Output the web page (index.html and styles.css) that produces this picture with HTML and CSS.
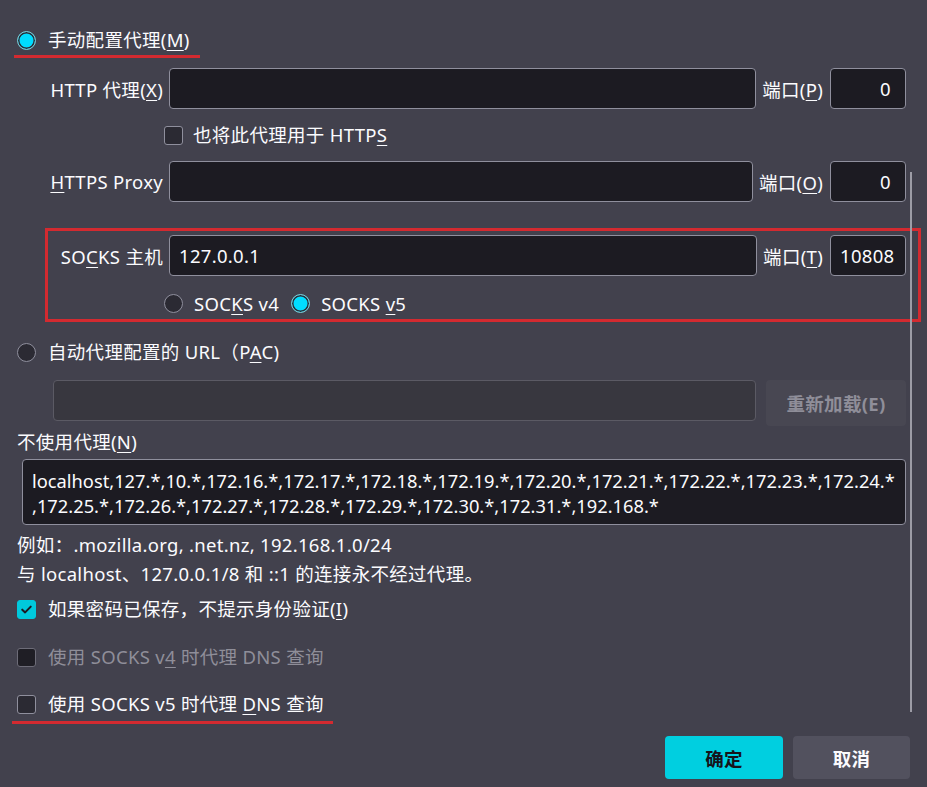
FILE: index.html
```html
<!DOCTYPE html>
<html lang="zh-CN">
<head>
<meta charset="utf-8">
<title>连接设置</title>
<link rel="stylesheet" href="styles.css">
</head>
<body>
<div class="dialog">
  <div class="radio-row top-radio annot-1">
    <span class="radio checked"></span>
    <span>手动配置代理(<u>M</u>)</span>
  </div>

  <div class="proxy-block">
    <div class="field-row row-http">
      <span class="field-label">HTTP 代理(<u>X</u>)</span>
      <div class="input grow"></div>
      <span class="port-label">端口(<u>P</u>)</span>
      <div class="input port">0</div>
    </div>

    <div class="check-row share-row">
      <span class="checkbox"></span>
      <span>也将此代理用于 HTTP<u>S</u></span>
    </div>

    <div class="field-row row-https">
      <span class="field-label"><u>H</u>TTPS Proxy</span>
      <div class="input grow"></div>
      <span class="port-label">端口(<u>O</u>)</span>
      <div class="input port">0</div>
    </div>

    <div class="socks-box">
      <div class="field-row">
        <span class="field-label">SO<u>C</u>KS 主机</span>
        <div class="input grow host">127.0.0.1</div>
        <span class="port-label">端口(<u>T</u>)</span>
        <div class="input port">10808</div>
      </div>
      <div class="socks-versions">
        <span class="radio"></span>
        <span class="ver-text">SOC<u>K</u>S v4</span>
        <span class="radio checked"></span>
        <span class="ver-text">SOCKS <u>v</u>5</span>
      </div>
    </div>
  </div>

  <div class="radio-row pac-radio">
    <span class="radio"></span>
    <span>自动代理配置的 URL（P<u>A</u>C)</span>
  </div>

  <div class="pac-row">
    <div class="input disabled grow"></div>
    <div class="reload-btn">重新加载(E)</div>
  </div>

  <div class="noproxy-label">不使用代理(<u>N</u>)</div>
  <div class="textarea">localhost,127.*,10.*,172.16.*,172.17.*,172.18.*,172.19.*,172.20.*,172.21.*,172.22.*,172.23.*,172.24.*<br>,172.25.*,172.26.*,172.27.*,172.28.*,172.29.*,172.30.*,172.31.*,192.168.*</div>

  <div class="hint first-hint">例如：.mozilla.org, .net.nz, 192.168.1.0/24</div>
  <div class="hint">与 localhost、127.0.0.1/8 和 ::1 的连接永不经过代理。</div>

  <div class="check-row main-check checked-row">
    <span class="checkbox checked"><svg viewBox="0 0 20 20" width="19" height="19"><path d="M5 10.2 L8.4 13.4 L15 6.6" fill="none" stroke="#1c1b22" stroke-width="2.4" stroke-linecap="round" stroke-linejoin="round"/></svg></span>
    <span>如果密码已保存，不提示身份验证(<u>I</u>)</span>
  </div>

  <div class="check-row main-check disabled-row">
    <span class="checkbox dim"></span>
    <span>使用 SOCKS v<u>4</u> 时代理 DNS 查询</span>
  </div>

  <div class="check-row main-check dns-row annot-2">
    <span class="checkbox"></span>
    <span>使用 SOCKS v5 时代理 <u>D</u>NS 查询</span>
  </div>

  <div class="button-row">
    <div class="btn primary">确定</div>
    <div class="btn secondary">取消</div>
  </div>

  <div class="scroll-line"></div>
</div>
</body>
</html>
```

FILE: styles.css
```css
html, body {
  margin: 0;
  padding: 0;
}
body {
  background: #42414d;
  color: #fbfbfe;
  font-family: "Noto Sans", "Noto Sans CJK SC", sans-serif;
  font-size: 18.5px;
  letter-spacing: 0.3px;
}
u {
  text-decoration: underline;
  text-decoration-thickness: 1px;
  text-underline-offset: 3px;
}
.dialog {
  position: relative;
  width: 927px;
  height: 787px;
  box-sizing: border-box;
  padding: 28px 17px 0 17px;
  display: flex;
  flex-direction: column;
  overflow: hidden;
}

/* radios & checkboxes */
.radio {
  width: 19px;
  height: 19px;
  box-sizing: border-box;
  border-radius: 50%;
  border: 1px solid #8f8f9d;
  background: #2b2a33;
  flex: none;
}
.radio.checked {
  background: #00ddff;
  border: 1px solid #7fc6d0;
  box-shadow: inset 0 0 0 1.5px #2b2a33;
}
.checkbox {
  width: 19px;
  height: 19px;
  box-sizing: border-box;
  border-radius: 3px;
  border: 1px solid #8f8f9d;
  background: #2b2a33;
  flex: none;
  display: flex;
  align-items: center;
  justify-content: center;
}
.checkbox.checked {
  background: #00c9dc;
  border-color: #00c9dc;
}
.checkbox.dim {
  background: #1f1e25;
  border-color: #6d6c78;
}

.radio-row, .check-row {
  display: flex;
  align-items: center;
  height: 24px;
  line-height: 24px;
  position: relative;
  white-space: nowrap;
}
.radio-row .radio, .check-row .checkbox {
  margin-right: 12px;
}

/* proxy fields */
.proxy-block {
  display: flex;
  flex-direction: column;
  margin-left: 31px;
  margin-right: 4px;
}
.field-row {
  display: flex;
  align-items: center;
  height: 41px;
}
.row-http { margin-top: 16px; }
.row-https { margin-top: 14px; }
.field-label {
  width: 121px;
  flex: none;
  box-sizing: border-box;
  padding-right: 6px;
  text-align: right;
  white-space: nowrap;
}
.input {
  height: 41px;
  box-sizing: border-box;
  border: 1px solid #8f8f9d;
  border-radius: 4px;
  background: #1c1b22;
  color: #fbfbfe;
  line-height: 39px;
  padding: 0 9px;
  white-space: nowrap;
}
.grow { flex: 1; min-width: 0; }
.port {
  width: 76px;
  flex: none;
  text-align: right;
  padding-right: 14px;
}
.port-label {
  flex: none;
  margin: 0 7px 0 6px;
  white-space: nowrap;
}
.share-row {
  margin-top: 14px;
  margin-left: 116px;
}
.share-row .checkbox { margin-right: 10px; }

.socks-box {
  margin-top: 26px;
  margin-left: -3px;
  margin-right: -15px;
  border: 3px solid #d32a30;
  padding: 4px 12px 4px 0;
}
.socks-versions {
  display: flex;
  align-items: center;
  height: 24px;
  margin-top: 15px;
  padding-left: 116px;
  white-space: nowrap;
}
.socks-versions .radio { margin-right: 11px; }
.socks-versions .ver-text { margin-right: 12px; }

.pac-radio { margin-top: 18px; }

.pac-row {
  display: flex;
  align-items: flex-start;
  height: 41px;
  margin-top: 16px;
  margin-left: 36px;
  margin-right: 4px;
}
.input.disabled {
  background: #38373f;
  border-color: #5b5a64;
}
.reload-btn {
  flex: none;
  width: 140px;
  height: 46px;
  margin-left: 10px;
  border-radius: 4px;
  background: #484752;
  color: #8f8e99;
  font-weight: bold;
  display: flex;
  align-items: center;
  justify-content: center;
}

.noproxy-label {
  margin-top: 10px;
  height: 22px;
  line-height: 22px;
}
.textarea {
  margin-top: 6px;
  margin-left: 5px;
  margin-right: 4px;
  height: 66px;
  box-sizing: border-box;
  border: 1px solid #8f8f9d;
  border-radius: 4px;
  background: #1c1b22;
  padding: 8px 9px;
  line-height: 25px;
  font-size: 18.3px;
  letter-spacing: 0;
  white-space: nowrap;
  overflow: hidden;
}
.hint {
  height: 29px;
  line-height: 29px;
  white-space: nowrap;
}
.first-hint { margin-top: 5px; }

.main-check { margin-top: 9px; }
.disabled-row { margin-top: 24px; color: #8f8e99; }
.dns-row { margin-top: 23px; }

.button-row {
  display: flex;
  justify-content: flex-end;
  gap: 10px;
  margin-top: 20px;
}
.btn {
  width: 118px;
  height: 43px;
  border-radius: 4px;
  font-weight: bold;
  display: flex;
  align-items: center;
  justify-content: center;
}
.btn.primary {
  background: #00cfe0;
  color: #15141a;
}
.btn.secondary {
  width: 117px;
  background: #52515e;
  color: #fbfbfe;
}

/* red annotation marks (overlays) */
.annot-1::after {
  content: "";
  position: absolute;
  left: -3px;
  top: 27px;
  width: 186px;
  height: 3px;
  background: #d32a30;
}
.annot-2::after {
  content: "";
  position: absolute;
  left: -5px;
  top: 29px;
  width: 321px;
  height: 3px;
  background: #d32a30;
}

/* overlay scrollbar thumb */
.scroll-line {
  position: absolute;
  left: 910px;
  top: 172px;
  width: 2px;
  height: 540px;
  background: #9d9ca6;
}
```
